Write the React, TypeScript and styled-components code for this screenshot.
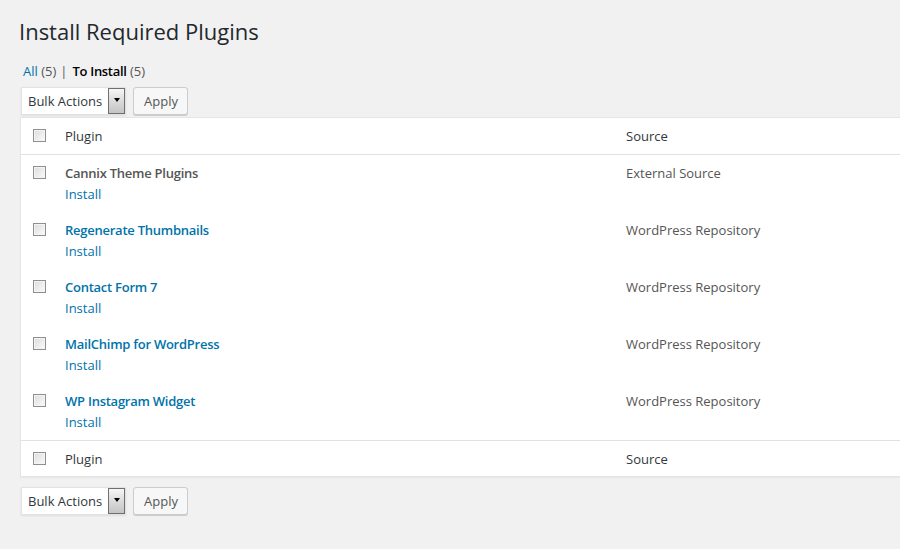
import React from "react";
import styled, { createGlobalStyle } from "styled-components";

const Global = createGlobalStyle`
  html, body { margin: 0; padding: 0; background: #f1f1f1; overflow: hidden; }
  body { font-family: "Open Sans", "Noto Sans", sans-serif; font-size: 13px; color: #444; }
`;

const Wrap = styled.div`
  width: 900px;
  height: 549px;
  overflow: hidden;
  padding-left: 20px;
  box-sizing: border-box;
`;

const Title = styled.h1`
  margin: 17px 0 0 -1px;
  font-size: 22px;
  line-height: 29px;
  font-weight: 400;
  color: #23282d;
`;

const Filters = styled.ul`
  list-style: none;
  margin: 15px 0 0 3px;
  padding: 0;
  display: flex;
  line-height: 20px;
  color: #666;
`;

const FilterItem = styled.li<{ $current?: boolean }>`
  color: #666;
  a {
    color: ${(p) => (p.$current ? "#000" : "#0073aa")};
    font-weight: ${(p) => (p.$current ? 600 : 400)};
    letter-spacing: ${(p) => (p.$current ? "-0.3px" : "0")};
    text-decoration: none;
  }
  span.count { color: #555; }
`;

const Sep = styled.span`
  margin: 0 5px 0 4px;
  color: #555;
`;

const Nav = styled.div<{ $top?: boolean }>`
  display: flex;
  gap: 7px;
  margin: ${(p) => (p.$top ? "6px 0 2px 1px" : "10px 0 0 1px")};
  height: 28px;
`;

const Select = styled.div`
  width: 105px;
  height: 28px;
  box-sizing: border-box;
  background: #fff;
  border: 1px solid #e2e2e2;
  box-shadow: 0 1px 2px rgba(0, 0, 0, 0.08);
  display: flex;
  align-items: stretch;
  color: #32373c;
`;

const SelectText = styled.span`
  flex: 1;
  padding-left: 6px;
  line-height: 26px;
  white-space: nowrap;
`;

const Arrow = styled.span`
  width: 17px;
  box-sizing: border-box;
  border: 1px solid #6f6f6f;
  background: linear-gradient(#f6f6f6, #d8d8d8 55%, #c4c4c4);
  display: flex;
  align-items: center;
  justify-content: center;
  &::after {
    content: "";
    border-left: 3.5px solid transparent;
    border-right: 3.5px solid transparent;
    border-top: 4px solid #000;
    margin-top: -2px;
  }
`;

const Button = styled.button`
  height: 28px;
  width: 55px;
  box-sizing: border-box;
  border: 1px solid #ccc;
  border-radius: 3px;
  background: #f7f7f7;
  box-shadow: 0 1px 0 #ccc;
  color: #555;
  font-family: inherit;
  font-size: 13px;
  padding: 0 10px;
  line-height: 26px;
`;

const Table = styled.div`
  width: 1000px;
  background: #fff;
  border: 1px solid #e5e5e5;
  border-right: none;
  box-shadow: 0 1px 1px rgba(0, 0, 0, 0.04);
`;

const Row = styled.div<{ $head?: boolean; $foot?: boolean }>`
  display: grid;
  grid-template-columns: 34px 561px 1fr;
  border-bottom: ${(p) => (p.$head ? "1px solid #e1e1e1" : "none")};
  border-top: ${(p) => (p.$foot ? "1px solid #e1e1e1" : "none")};
  padding: ${(p) => (p.$foot ? "8px 0 7px" : "8px 0")};
  line-height: 20px;
`;

const CheckCell = styled.div`
  padding-left: 12px;
  padding-top: 3px;
`;

const Check = styled.span`
  display: block;
  width: 13px;
  height: 13px;
  box-sizing: border-box;
  border: 1px solid #8e8f8f;
  background: linear-gradient(135deg, #dcdcdc, #fbfbfb);
  box-shadow: inset 0 0 0 1px #f4f4f4;
`;

const Cell = styled.div`
  padding-left: 10px;
`;

const HeadText = styled.span`
  color: #32373c;
  font-size: 13px;
`;

const Name = styled.strong<{ $link?: boolean }>`
  display: block;
  font-weight: 600;
  letter-spacing: -0.25px;
  color: ${(p) => (p.$link ? "#0073aa" : "#555")};
`;

const Action = styled.a`
  display: block;
  padding-top: 1px;
  color: #0073aa;
  text-decoration: none;
`;

const SourceText = styled.span`
  color: #555;
`;

const plugins = [
  { name: "Cannix Theme Plugins", link: false, source: "External Source" },
  { name: "Regenerate Thumbnails", link: true, source: "WordPress Repository" },
  { name: "Contact Form 7", link: true, source: "WordPress Repository" },
  { name: "MailChimp for WordPress", link: true, source: "WordPress Repository" },
  { name: "WP Instagram Widget", link: true, source: "WordPress Repository" },
];

const BulkBar = ({ top }: { top?: boolean }) => (
  <Nav $top={top}>
    <Select>
      <SelectText>Bulk Actions</SelectText>
      <Arrow />
    </Select>
    <Button>Apply</Button>
  </Nav>
);

export default function App() {
  return (
    <>
      <Global />
      <Wrap>
        <Title>Install Required Plugins</Title>
        <Filters>
          <FilterItem>
            <a href="#">All</a> <span className="count">(5)</span>
          </FilterItem>
          <Sep>|</Sep>
          <FilterItem $current>
            <a href="#">To Install</a> <span className="count">(5)</span>
          </FilterItem>
        </Filters>
        <BulkBar top />
        <Table>
          <Row $head>
            <CheckCell><Check /></CheckCell>
            <Cell><HeadText>Plugin</HeadText></Cell>
            <Cell><HeadText>Source</HeadText></Cell>
          </Row>
          {plugins.map((p) => (
            <Row key={p.name}>
              <CheckCell><Check /></CheckCell>
              <Cell>
                <Name $link={p.link}>{p.name}</Name>
                <Action href="#">Install</Action>
              </Cell>
              <Cell><SourceText>{p.source}</SourceText></Cell>
            </Row>
          ))}
          <Row $foot>
            <CheckCell><Check /></CheckCell>
            <Cell><HeadText>Plugin</HeadText></Cell>
            <Cell><HeadText>Source</HeadText></Cell>
          </Row>
        </Table>
        <BulkBar />
      </Wrap>
    </>
  );
}
